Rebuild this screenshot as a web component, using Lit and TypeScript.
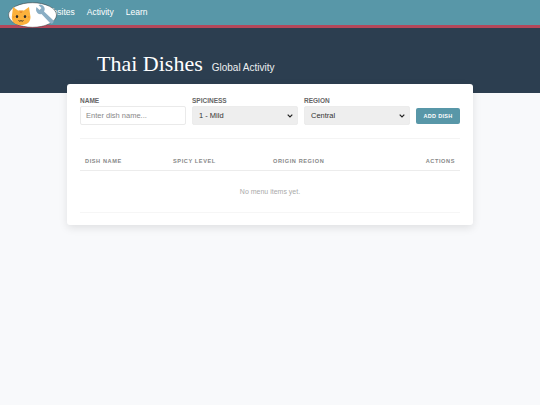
import { LitElement, html, css } from "lit";
import { customElement } from "lit/decorators.js";

const chevron = css`url("data:image/svg+xml,%3Csvg xmlns='http://www.w3.org/2000/svg' width='6' height='4' viewBox='0 0 6 4'%3E%3Cpath d='M.7.7 3 3 5.3.7' fill='none' stroke='%23222' stroke-width='1.2'/%3E%3C/svg%3E")`;

@customElement("app-root")
export class AppRoot extends LitElement {
  static styles = css`
    :host { display: block; min-height: 405px; background: #f8f9fb; font-family: "Liberation Sans", Arial, sans-serif; position: relative; }
    * { box-sizing: border-box; }
    .nav { height: 28px; background: #5897a8; border-bottom: 3px solid #b5475a; display: flex; align-items: center; padding: 0 0 1px 40px; gap: 12px; color: #fff; font-size: 8.5px; position: relative; }
    .nav span { line-height: 1; }
    .logo { position: absolute; left: 8px; top: 2px; width: 49px; height: 26px; z-index: 2; }
    .hero { height: 65px; background: #2c3e50; padding: 23px 0 0 97px; display: flex; align-items: baseline; gap: 9px; color: #fff; }
    .hero h1 { margin: 0; font: 400 22px/26px "Liberation Serif", Georgia, serif; }
    .hero small { font-size: 10px; color: #ecf0f1; }
    .card { position: relative; margin: -9px 67px 0; width: 406px; height: 141px; background: #fff; border-radius: 3px; padding: 13px; box-shadow: 0 3px 9px rgba(0,0,0,.1); }
    .form { display: flex; gap: 6px; align-items: flex-end; padding-bottom: 13px; border-bottom: 1px solid #f4f4f4; }
    .field { width: 106px; display: flex; flex-direction: column; gap: 2px; }
    label { font-size: 6.5px; line-height: 7px; font-weight: 700; color: #666; text-transform: uppercase; }
    .control { height: 19px; font: 7.5px "Liberation Sans", Arial, sans-serif; border-radius: 2px; color: #333; }
    input.control { border: 1px solid #eaeaea; background: #fff; padding: 0 5px; }
    input.control::placeholder { color: #888; }
    select.control { appearance: none; border: 1px solid #ececec; background: #eeeeee ${chevron} no-repeat right 4px center; padding: 0 6px; }
    button { width: 44px; height: 16px; margin-bottom: 1px; background: #5897a8; border: 0; border-radius: 2px; color: #fff; font: 700 5.5px "Liberation Sans", Arial, sans-serif; letter-spacing: .3px; }
    .head { display: grid; grid-template-columns: 88px 100px 1fr auto; padding: 19px 5px 6px; border-bottom: 1px solid #ececec; font-size: 5.6px; font-weight: 700; letter-spacing: .6px; color: #888; }
    .empty { height: 42px; display: flex; align-items: center; justify-content: center; font-size: 7px; color: #aaa; border-bottom: 1px solid #f6f6f6; }
  `;

  render() {
    return html`
      <svg class="logo" viewBox="0 0 49 26">
        <ellipse cx="24.5" cy="13" rx="24" ry="12.3" fill="#fff" stroke="#333" stroke-width=".5" />
        <path d="M5 5 L10 8.5 H16 L21 5 L22.5 15 C22.5 21 18 23 13 23 C8 23 3.8 21 3.8 15 Z" fill="#fbb13c" />
        <path d="M12 8.5 l.5 2.5 M14 8.5 l-.5 2.5 M5 15 h1.5 M21.5 15 h-1.5" stroke="#e8892a" stroke-width="1" fill="none" />
        <ellipse cx="9" cy="14.5" rx="1.2" ry="1.5" fill="#2b2b2b" />
        <ellipse cx="17" cy="14.5" rx="1.2" ry="1.5" fill="#2b2b2b" />
        <path d="M10.5 18.5 Q12 20 13 18.5 Q14 20 15.5 18.5" fill="none" stroke="#2b2b2b" stroke-width=".9" />
        <path d="M28 7 a4.5 4.5 0 0 0 5.5 5 L42 21 a1.8 1.8 0 0 0 3 -3 L36 9.5 a4.5 4.5 0 0 0 -5.5 -6.5 L33.5 6 L31.5 8 L28.5 5 Z" fill="#8aaec4" />
      </svg>
      <nav class="nav"><span>Websites</span><span>Activity</span><span>Learn</span></nav>
      <header class="hero"><h1>Thai Dishes</h1><small>Global Activity</small></header>
      <main class="card">
        <div class="form">
          <div class="field"><label>Name</label><input class="control" placeholder="Enter dish name..." /></div>
          <div class="field"><label>Spiciness</label><select class="control"><option>1 - Mild</option></select></div>
          <div class="field"><label>Region</label><select class="control"><option>Central</option></select></div>
          <button>ADD DISH</button>
        </div>
        <div class="head"><span>DISH NAME</span><span>SPICY LEVEL</span><span>ORIGIN REGION</span><span>ACTIONS</span></div>
        <div class="empty">No menu items yet.</div>
      </main>
    `;
  }
}
